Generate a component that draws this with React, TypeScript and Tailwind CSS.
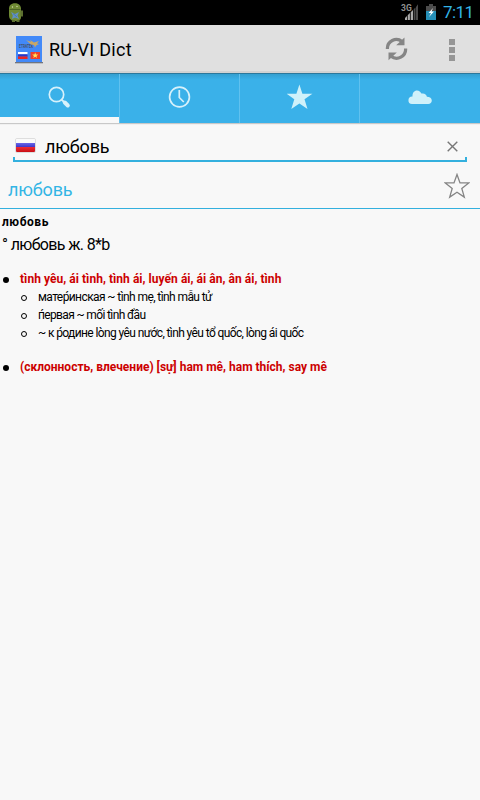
import type { ReactNode } from "react";

function Android() {
  return (
    <svg className="block" width="16" height="20" viewBox="0 0 16 20">
      <path d="M1 6C1 2.500 3 .3 7 .3S13 3 13 6v8c0 3-2 4-5.500 4C3 18 1 16 1 12z" fill="#6f8a34" />
      <path d="M12.500 7.500H15v6h-2.500zM4 17h3v2H4zM8.500 17h3v2h-3z" fill="#5c6f30" />
      <path d="M1.500 6.500h11" stroke="#4c6428" />
      <circle cx="4.500" cy="4" r="0.700" fill="#d8dcb4" />
      <circle cx="9" cy="3.500" r="0.700" fill="#d8dcb4" />
      <path d="M3 9l4 2 4-2-1.500 3.500L11 16l-4-1.500L4 16l.8-3.500z" fill="#6091c4" />
      <path d="M5 10.500l4 3.500" stroke="#4a78a8" />
    </svg>
  );
}

function AppLogo() {
  return (
    <svg className="block" width="28" height="28" viewBox="0 0 28 28">
      <rect x="1" width="26" height="26.500" fill="#4289f8" />
      <rect y="26" width="28" height="1.300" fill="#6f7580" />
      <text x="4" y="11.500" fontSize="5" fontWeight="700" fontFamily="Roboto, sans-serif" fill="#46536a" textLength="14" lengthAdjust="spacingAndGlyphs">ETRATEK</text>
      <path d="M11 4l5 2-1-2 4 2.500L24 5l-2 2.500 2 .5-3 1.500-1 2-1-2.500-3-.5z" fill="#c9a766" />
      <rect x="3" y="16" width="9.500" height="2.400" fill="#fff" />
      <rect x="3" y="18.300" width="9.500" height="2.300" fill="#2937c8" />
      <rect x="3" y="20.500" width="9.500" height="2.500" fill="#e72525" />
      <rect x="15.500" y="16" width="9.500" height="7" fill="#ee4128" />
      <path d="M20.200 16.500l.8 2h2.200l-1.700 1.400.6 2.200-1.900-1.300-1.900 1.300.6-2.200-1.700-1.400h2.200z" fill="#ffe35d" />
    </svg>
  );
}

function StatusBar() {
  return (
    <div className="flex h-[25px] items-start bg-black">
      <div className="ml-2 mt-[3px]"><Android /></div>
      <svg className="ml-auto mr-[6px] mt-1 block" width="19" height="18" viewBox="0 0 19 18">
        <text x="1" y="7" fontSize="8.500" fontWeight="700" fontFamily="Roboto, sans-serif" fill="#909090">3G</text>
        <path d="M5 16v-2l2-2v4zM7.700 16v-4.700l2.200-2.200V16zM10.700 16V8.300l2.300-2.300v10z" fill="#aaa" />
        <path d="M13.700 16V5.300L15.500 3.500V16zM16 16V3l2-2.800V16z" fill="#4a4a4a" />
      </svg>
      <svg className="mr-[6px] mt-1 block" width="12" height="17" viewBox="0 0 12 17">
        <path d="M4 0h4v2h3v6H1V2h3z" fill="#4c4c4c" />
        <path d="M1 7h10v9H1z" fill="#268fb7" />
        <path d="M8 4L3.500 9H6l-2 4 5-5.500H6.500z" fill="#fff" />
      </svg>
      <span className="mr-[6px] w-[31px] whitespace-nowrap text-[17px] leading-[24px] tracking-[-0.55px] text-[#33b5e5]">7:11</span>
    </div>
  );
}

function ActionBar() {
  return (
    <div className="flex h-12 items-center border-b-2 border-[#d2d2d2] bg-[#e0e0e0]">
      <div className="ml-[15px] mt-[3px]"><AppLogo /></div>
      <h1 className="ml-[6px] mt-[3px] whitespace-nowrap text-[18px] leading-6 tracking-[0.28px] text-black">RU-VI Dict</h1>
      <svg className="ml-auto mr-10 mt-[2px] block" width="24" height="24" viewBox="0 0 24 24" fill="none" stroke="#858585" strokeWidth="3.200">
        <path d="M2.400 12A9 9 0 0 1 17 4.500" />
        <path d="M20.600 11.500A9 9 0 0 1 6 19.200" />
        <path d="M19.500 .5v7.800h-8.300z" fill="#858585" stroke="none" />
        <path d="M3.500 23.200v-7.800h8.300z" fill="#858585" stroke="none" />
      </svg>
      <div className="mr-[25px] mt-[3px] flex flex-col gap-[2px]">
        <i className="block size-[6px] bg-[#969696]" />
        <i className="block size-[6px] bg-[#969696]" />
        <i className="block size-[6px] bg-[#969696]" />
      </div>
    </div>
  );
}

function Tab({ active = false, last = false, children }: { active?: boolean; last?: boolean; children: ReactNode }) {
  return (
    <div className={`flex w-[120px] flex-col items-center ${last ? "" : "border-r border-[#60c1ef]"}`}>
      <div className="flex h-[43px] items-center pt-[5px]">{children}</div>
      {active && <div className="h-[6px] w-full bg-[#f8f8f8]" />}
    </div>
  );
}

function Tabs() {
  return (
    <div className="flex h-[50px] border-t border-[#2c789c] bg-linear-to-b from-[#349fd0] from-0% via-[#3ab1e9] via-12% to-[#3ab1e9] shadow-[0_1px_1px_#c8c8c8]">
      <Tab active>
        <svg className="-mt-px block" width="24" height="24" viewBox="0 0 24 24" fill="none" stroke="#d7f1fb">
          <circle cx="8.500" cy="8.500" r="7.200" strokeWidth="1.700" />
          <path d="M13.500 13.500l3 3" strokeWidth="1.800" />
          <path d="M16.800 16.500l3 3" strokeWidth="4" strokeLinecap="round" />
        </svg>
      </Tab>
      <Tab>
        <svg className="-mt-[2px] block" width="24" height="24" viewBox="0 0 24 24" fill="none" stroke="#d7f1fb">
          <circle cx="11.500" cy="12" r="9.900" strokeWidth="1.700" />
          <path d="M11.300 5v7.500l4.500 4.500" strokeWidth="1.700" />
        </svg>
      </Tab>
      <Tab>
        <svg className="-mt-[2px] block" width="26" height="26" viewBox="0 0 26 26">
          <path d="M12.400 .5l3 9.200h10l-7.900 5.600 3 9.700-8.100-5.500L4.300 25l3-9.700L-.3 9.700h9.700z" fill="#cff1fa" />
        </svg>
      </Tab>
      <Tab last>
        <svg className="-mt-[3px] block" width="24" height="14" viewBox="0 0 24 14">
          <path d="M4 14a3.800 3.800 0 0 1 .5-7.600C4.300 2.700 6.300.4 9 .4c2.200 0 3.700 1.300 4.400 3.200 2.700-.8 5.200.7 5.500 3.200 3 .1 4.900 1.600 4.900 3.700 0 2-1.600 3.500-3.500 3.500z" fill="#cff1fa" />
        </svg>
      </Tab>
    </div>
  );
}

function SearchField() {
  return (
    <div className="mx-[13px] mt-[7px] flex h-[32px] items-center border-b-2 border-[#33b0de] bg-[linear-gradient(#33b0de,#33b0de),linear-gradient(#33b0de,#33b0de)] bg-[length:2px_3px] bg-[position:left_bottom,right_bottom] bg-no-repeat">
      <div className="ml-[2px] mt-px flex h-[15px] w-[21px] flex-col overflow-hidden rounded-[2px] border border-[#dedede]">
        <i className="h-[4px] bg-[#fafafa]" />
        <i className="h-[4px] bg-linear-to-b from-[#6a66e8] to-[#3e35c9]" />
        <i className="h-[5px] bg-linear-to-b from-[#ee2b35] to-[#c90d13]" />
      </div>
      <span className="ml-[9px] mt-[3px] whitespace-nowrap text-[18px] leading-6 tracking-[-0.15px] text-black">любовь</span>
      <svg className="ml-auto mr-[9px] mt-[3px] block" width="11" height="11" viewBox="0 0 11 11">
        <path d="M.7.7l9.600 9.600M10.300.7L.7 10.300" stroke="#777" strokeWidth="1.400" />
      </svg>
    </div>
  );
}

function Meaning({ className, children }: { className: string; children: ReactNode }) {
  return (
    <li className="flex h-[18px] items-center pl-[21px]">
      <i className="mt-px block size-[6px] shrink-0 rounded-full border border-black" />
      <span className={`ml-[11px] whitespace-nowrap text-[12px] text-black ${className}`}>{children}</span>
    </li>
  );
}

function Sense({ className, children }: { className: string; children: ReactNode }) {
  return (
    <div className="flex h-[18px] items-center pl-[3px]">
      <i className="mt-px block size-[6px] shrink-0 rounded-full bg-black" />
      <span className={`ml-[11px] whitespace-nowrap text-[12px] font-bold text-[#cc0000] ${className}`}>{children}</span>
    </div>
  );
}

export default function App() {
  return (
    <div className="flex h-[800px] w-[480px] flex-col overflow-hidden bg-[#f8f8f8] font-[Roboto,'Noto_Sans',sans-serif]">
      <StatusBar />
      <ActionBar />
      <Tabs />
      <SearchField />
      <div className="flex h-[47px] items-center border-b border-[#33b0de]">
        <h2 className="ml-2 mt-[9px] whitespace-nowrap text-[18px] leading-6 tracking-[-0.15px] text-[#33b5e5]">любовь</h2>
        <svg className="ml-auto mr-[10px] mt-[2px] block" width="26" height="26" viewBox="0 0 26 26">
          <path d="M13 1.500l3 8.400h8.700l-6.900 5.500 2.500 8.700-7.300-4.900-7.300 4.900 2.500-8.700-6.900-5.500H10z" fill="none" stroke="#858585" strokeWidth="1.300" />
        </svg>
      </div>
      <main className="pt-[4px]">
        <div className="h-[18px] whitespace-nowrap pl-[2px] text-[12px] font-bold leading-[18px] tracking-[0.55px] text-black">любовь</div>
        <div className="h-[26px] whitespace-nowrap pl-[2px] text-[16px] leading-[27px] tracking-[-0.65px] text-black">° любовь ж. 8*b</div>
        <div className="pt-[13px]">
          <Sense className="tracking-[0.04px]">tình yêu, ái tình, tình ái, luyến ái, ái ân, ân ái, tình</Sense>
          <ul>
            <Meaning className="tracking-[-0.59px]">матер́инская ~ tình mẹ, tình mẫu tử</Meaning>
            <Meaning className="tracking-[-0.64px]">п́ервая ~ mối tình đầu</Meaning>
            <Meaning className="tracking-[-0.61px]">~ к р́одине lòng yêu nước, tình yêu tổ quốc, lòng ái quốc</Meaning>
          </ul>
        </div>
        <div className="pt-[16px]">
          <Sense className="">(склонность, влечение) [sự] ham mê, ham thích, say mê</Sense>
        </div>
      </main>
    </div>
  );
}
